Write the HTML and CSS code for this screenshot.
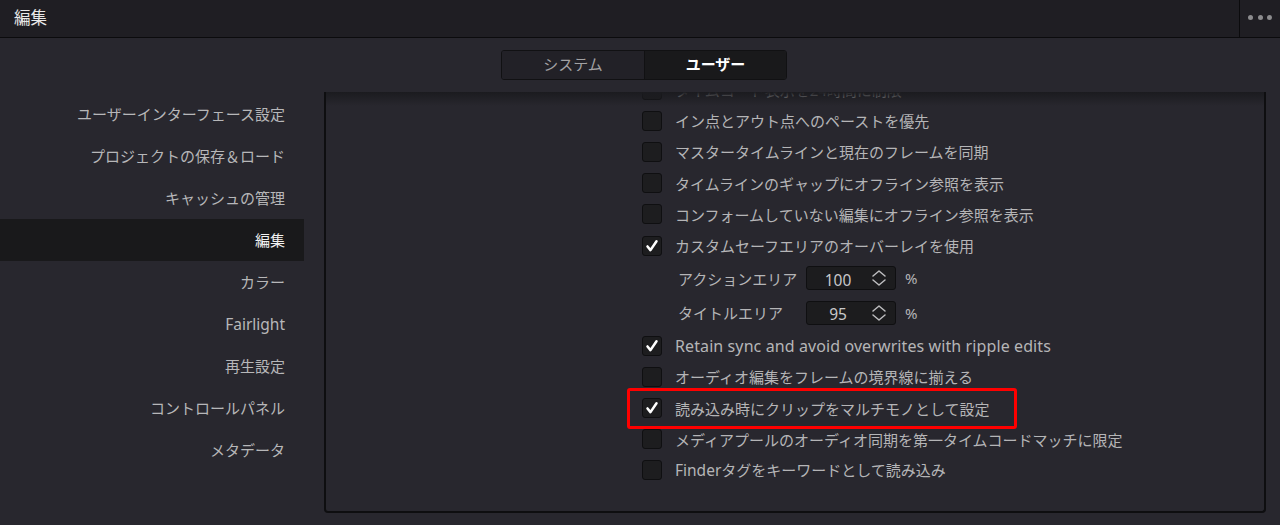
FILE: index.html
```html
<!DOCTYPE html>
<html lang="ja">
<head>
<meta charset="utf-8">
<title>編集</title>
<link rel="stylesheet" href="styles.css">
</head>
<body>
<div class="app">
  <header class="titlebar">
    <div class="title">編集</div>
    <div class="menu"><span class="dot"></span><span class="dot"></span><span class="dot"></span></div>
  </header>

  <div class="tabs-row">
    <div class="tabs">
      <div class="tab">システム</div>
      <div class="tab active">ユーザー</div>
    </div>
  </div>

  <div class="main">
    <nav class="sidebar">
      <div class="nav-item">ユーザーインターフェース設定</div>
      <div class="nav-item">プロジェクトの保存＆ロード</div>
      <div class="nav-item">キャッシュの管理</div>
      <div class="nav-item selected">編集</div>
      <div class="nav-item">カラー</div>
      <div class="nav-item latin">Fairlight</div>
      <div class="nav-item">再生設定</div>
      <div class="nav-item">コントロールパネル</div>
      <div class="nav-item">メタデータ</div>
    </nav>

    <section class="panel">
      <div class="options">
        <div class="opt"><span class="cb"></span><span class="label">タイムコード表示を24時間に制限</span></div>
        <div class="opt"><span class="cb"></span><span class="label">イン点とアウト点へのペーストを優先</span></div>
        <div class="opt"><span class="cb"></span><span class="label">マスタータイムラインと現在のフレームを同期</span></div>
        <div class="opt"><span class="cb"></span><span class="label">タイムラインのギャップにオフライン参照を表示</span></div>
        <div class="opt"><span class="cb"></span><span class="label">コンフォームしていない編集にオフライン参照を表示</span></div>
        <div class="opt"><span class="cb checked"><svg viewBox="0 0 20 20"><path d="M5 10.5 L8.3 14.6 L15 4.8"/></svg></span><span class="label">カスタムセーフエリアのオーバーレイを使用</span></div>
        <div class="field">
          <span class="field-label">アクションエリア</span>
          <span class="spin"><span class="num">100</span><svg class="chev" viewBox="0 0 16 20"><path d="M2 8 L8 3 L14 8 M2 12 L8 17 L14 12"/></svg></span>
          <span class="unit">%</span>
        </div>
        <div class="field">
          <span class="field-label">タイトルエリア</span>
          <span class="spin"><span class="num">95</span><svg class="chev" viewBox="0 0 16 20"><path d="M2 8 L8 3 L14 8 M2 12 L8 17 L14 12"/></svg></span>
          <span class="unit">%</span>
        </div>
        <div class="opt"><span class="cb checked"><svg viewBox="0 0 20 20"><path d="M5 10.5 L8.3 14.6 L15 4.8"/></svg></span><span class="label latin">Retain sync and avoid overwrites with ripple edits</span></div>
        <div class="opt"><span class="cb"></span><span class="label">オーディオ編集をフレームの境界線に揃える</span></div>
        <div class="opt marked"><span class="cb checked"><svg viewBox="0 0 20 20"><path d="M5 10.5 L8.3 14.6 L15 4.8"/></svg></span><span class="label">読み込み時にクリップをマルチモノとして設定</span><span class="highlight"></span></div>
        <div class="opt"><span class="cb"></span><span class="label">メディアプールのオーディオ同期を第一タイムコードマッチに限定</span></div>
        <div class="opt"><span class="cb"></span><span class="label"><span class="latin">Finder</span>タグをキーワードとして読み込み</span></div>
      </div>
    </section>
  </div>
</div>
</body>
</html>
```

FILE: styles.css
```css
* { box-sizing: border-box; }

html, body {
  margin: 0;
  padding: 0;
  background: #28272e;
  height: 100%;
  overflow: hidden;
}

body {
  font-family: "Noto Sans", "Noto Sans CJK JP", sans-serif;
  color: #b5b5b5;
}

.app {
  width: 1280px;
  height: 525px;
  display: flex;
  flex-direction: column;
}

/* title bar */
.titlebar {
  height: 38px;
  flex: none;
  display: flex;
  background: #1f1e23;
  border-bottom: 1px solid #0b0b0d;
}
.title {
  flex: 1;
  padding-left: 14px;
  font-size: 16.5px;
  line-height: 36px;
  color: #e8e8e8;
}
.menu {
  width: 41px;
  border-left: 1px solid #0b0b0d;
  display: flex;
  align-items: center;
  justify-content: center;
  gap: 4.5px;
  padding-bottom: 2px;
}
.dot {
  width: 5px;
  height: 5px;
  border-radius: 50%;
  background: #8c8c8e;
}

/* tabs */
.tabs-row {
  display: flex;
  justify-content: center;
  padding-top: 12px;
  padding-left: 8px;
}
.tabs {
  display: flex;
  height: 30px;
  border: 1px solid #111113;
  border-radius: 3px;
  overflow: hidden;
}
.tab {
  width: 142px;
  text-align: center;
  font-size: 15px;
  line-height: 27px;
  background: #222127;
  color: #a2a2a4;
}
.tab.active {
  background: #19191b;
  color: #ffffff;
  font-weight: 700;
  border-left: 1px solid #111113;
}

/* main */
.main {
  flex: 1;
  display: flex;
  padding-top: 12px;
  padding-bottom: 12px;
  min-height: 0;
}

.sidebar {
  width: 304px;
  flex: none;
  margin-right: 20px;
  padding-top: 1px;
}
.nav-item {
  height: 42px;
  line-height: 42px;
  text-align: right;
  padding-right: 19px;
  font-size: 15px;
  color: #b7b7b9;
}
.nav-item.latin {
  font-size: 15.5px;
}
.nav-item.selected {
  background: #19191b;
  color: #f2f2f2;
}

/* panel */
.panel {
  position: relative;
  flex: 1;
  margin-right: 14px;
  background: #28272e;
  border-left: 2px solid #0e0e10;
  border-right: 2px solid #0e0e10;
  border-bottom: 2px solid #0e0e10;
  border-radius: 0 0 4px 4px;
  overflow: hidden;
  padding-left: 316px;
}
.panel::before {
  content: "";
  position: absolute;
  left: 0;
  right: 0;
  top: 0;
  height: 14px;
  background: linear-gradient(#1b1b1f, rgba(40, 39, 46, 0));
  pointer-events: none;
  z-index: 2;
}

.options {
  margin-top: -18px;
}

.opt {
  position: relative;
  height: 31.2px;
  display: flex;
  align-items: center;
  gap: 13px;
  font-size: 15px;
  white-space: nowrap;
}
.cb {
  width: 20px;
  height: 20px;
  flex: none;
  background: #1d1d1f;
  border: 1px solid #0f0f11;
  border-radius: 3px;
  display: flex;
  align-items: center;
  justify-content: center;
}
.cb svg {
  width: 18px;
  height: 18px;
}
.cb svg path {
  fill: none;
  stroke: #ffffff;
  stroke-width: 2.8;
  stroke-linecap: round;
  stroke-linejoin: round;
}
.label {
  color: #b5b5b7;
}
.label.latin {
  font-size: 16px;
  letter-spacing: 0.1px;
}
.label .latin {
  font-size: 15.5px;
}

.highlight {
  position: absolute;
  left: -15px;
  top: -5px;
  width: 390px;
  height: 41px;
  border: 3px solid #ff0000;
  border-radius: 3px;
  pointer-events: none;
}

.field {
  height: 34.5px;
  display: flex;
  align-items: center;
  padding-left: 36px;
  font-size: 15px;
}
.field-label {
  width: 128px;
  color: #b5b5b7;
}
.spin {
  width: 90px;
  height: 24px;
  display: flex;
  align-items: center;
  background: #1c1c1e;
  border: 1px solid #0f0f11;
  border-radius: 3px;
}
.num {
  width: 62px;
  text-align: center;
  color: #c8c8ca;
  padding-top: 3px;
  line-height: 20px;
  font-size: 15.5px;
}
.chev {
  width: 16px;
  height: 20px;
  margin-left: 2px;
}
.chev path {
  fill: none;
  stroke: #bdbdbf;
  stroke-width: 1.5;
  stroke-linecap: round;
  stroke-linejoin: round;
}
.unit {
  margin-left: 9px;
  color: #b5b5b7;
}
```
